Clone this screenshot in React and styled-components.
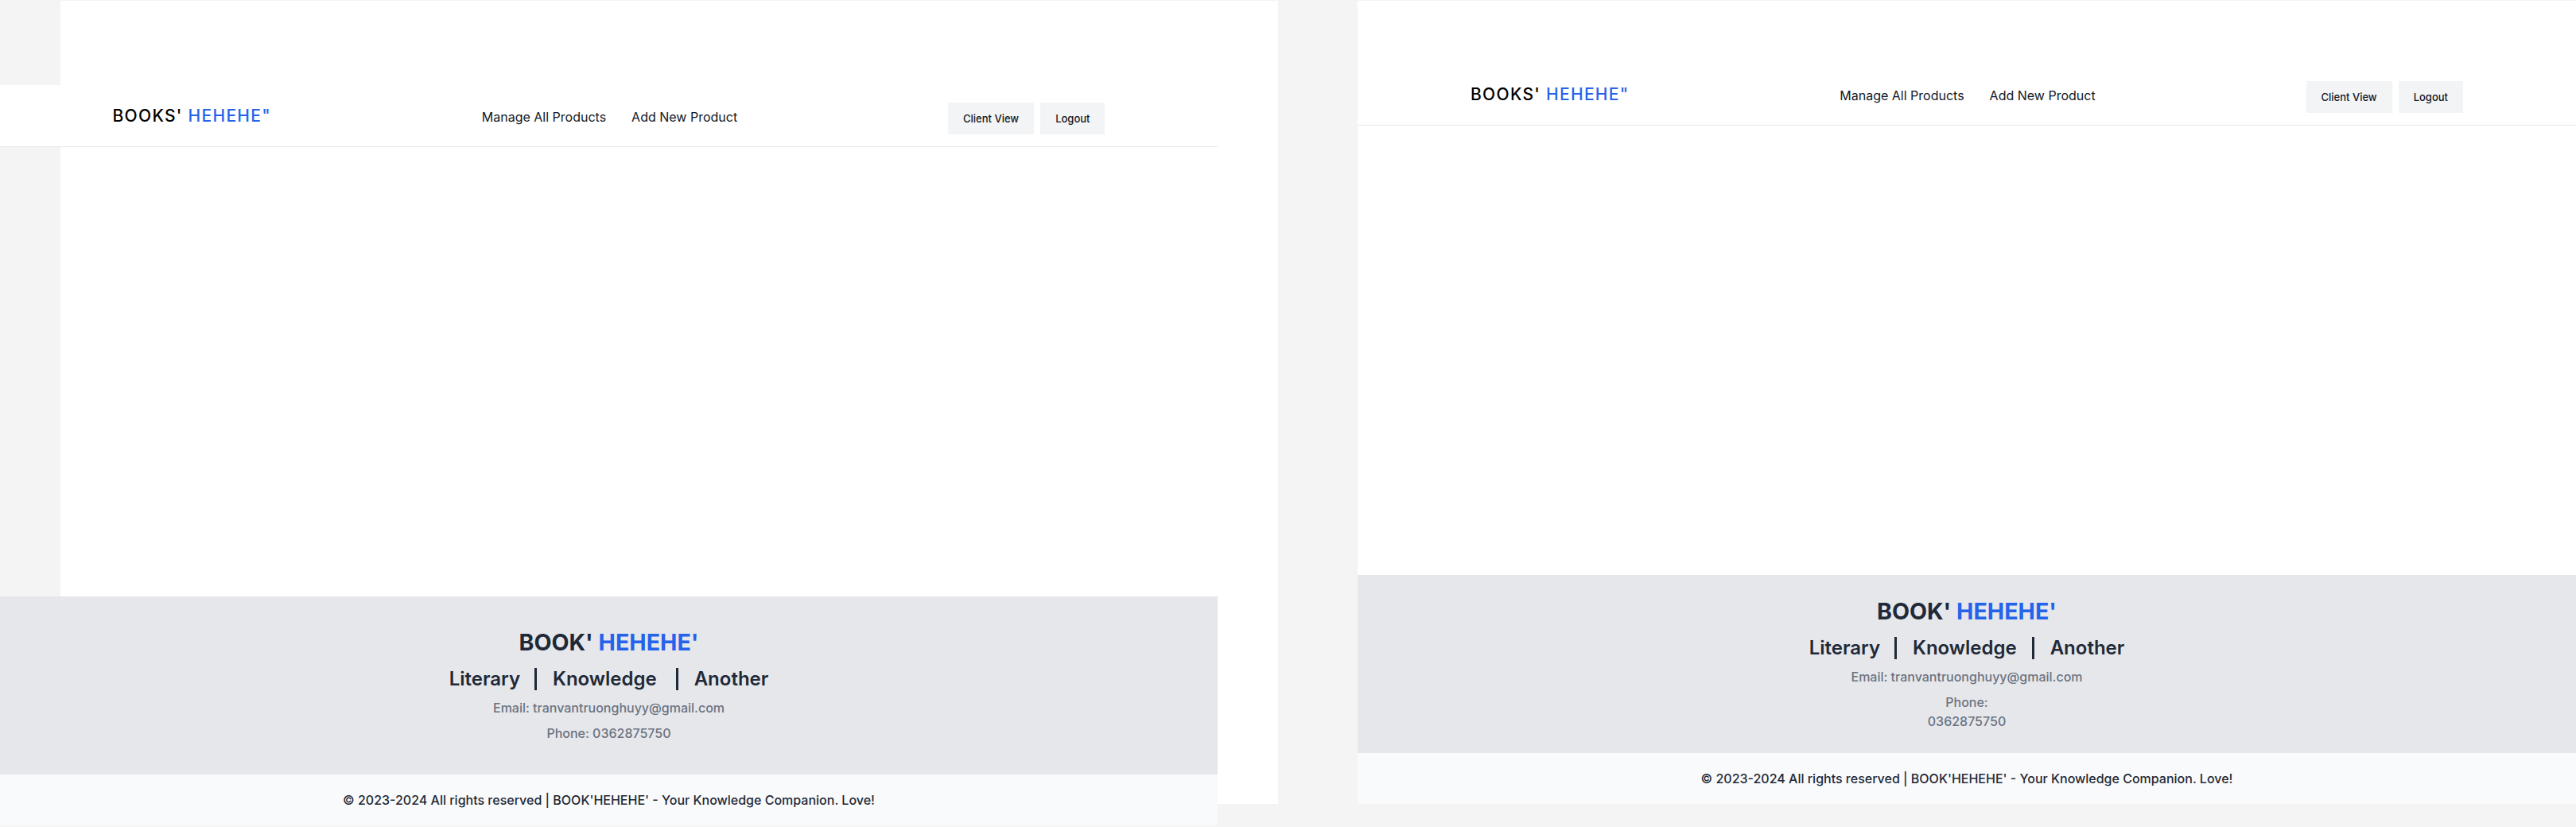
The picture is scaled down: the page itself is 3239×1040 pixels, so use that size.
import React from "react";
import styled, { createGlobalStyle } from "styled-components";

const GlobalStyle = createGlobalStyle`
  html, body { margin: 0; padding: 0; background: #f4f4f4; }
  body { font-family: Inter, "Noto Sans", sans-serif; }
  * { box-sizing: border-box; }
`;

const Stage = styled.div`
  display: flex;
  align-items: flex-start;
  gap: 100px;
  padding-left: 76px;
  width: 3239px;
  height: 1040px;
  overflow: hidden;
  background: #f4f4f4;
`;

const Page = styled.div`
  flex-shrink: 0;
  width: ${(p) => p.$w}px;
  height: 1010px;
  margin-top: 1px;
  background: #ffffff;
`;

const Content = styled.div`
  width: ${(p) => p.$w}px;
  margin-left: ${(p) => p.$shift}px;
  padding-top: ${(p) => p.$top}px;
  display: flex;
  flex-direction: column;
`;

const Nav = styled.header`
  height: 78px;
  background: #ffffff;
  border-bottom: 1px solid #e5e7eb;
  display: flex;
  justify-content: center;
`;

const NavInner = styled.div`
  width: 1248px;
  display: flex;
  align-items: center;
  justify-content: space-between;
`;

const Logo = styled.div`
  font-size: 21px;
  font-weight: 500;
  color: #000000;
  letter-spacing: 1.3px;
  white-space: nowrap;
`;

const Blue = styled.span`
  color: #2563eb;
`;

const Links = styled.nav`
  display: flex;
  gap: 32px;
  margin-top: 2px;
`;

const NavLink = styled.a`
  font-size: 16px;
  font-weight: 400;
  color: #111827;
  text-decoration: none;
  white-space: nowrap;
`;

const Actions = styled.div`
  display: flex;
  gap: 8px;
  margin-top: 6px;
`;

const Button = styled.button`
  height: 40px;
  padding: 0 19px;
  border: none;
  border-radius: 0;
  background: #f3f4f6;
  color: #111827;
  font-family: Inter, "Noto Sans", sans-serif;
  font-size: 13px;
  font-weight: 500;
  cursor: pointer;
`;

const Main = styled.main`
  height: 565px;
`;

const Footer = styled.footer`
  height: 224px;
  background: #e5e7eb;
  display: flex;
  flex-direction: column;
  align-items: center;
  justify-content: center;
  text-align: center;
`;

const FooterTitle = styled.h2`
  margin: 0;
  font-size: 28.6px;
  line-height: 36px;
  font-weight: 700;
  color: #1f2937;
`;

const Categories = styled.div`
  margin-top: 12px;
  display: flex;
  align-items: center;
  height: 32px;
  font-size: 24px;
  font-weight: 600;
  color: #1f2937;
`;

const Category = styled.span`
  line-height: 32px;
`;

const Sep = styled.span`
  display: block;
  width: 3px;
  height: 28px;
  background: #1f2937;
  margin: 0 20px 0 ${(p) => p.$left}px;
`;

const Info = styled.p`
  margin: 8px 0 0;
  font-size: 16px;
  line-height: 24px;
  font-weight: 500;
  color: #6b7280;
`;

const Block = styled.span`
  display: block;
`;

const Bottom = styled.div`
  height: 64px;
  background: #f9fafb;
  display: flex;
  align-items: center;
  justify-content: center;
  font-size: 16px;
  font-weight: 500;
  color: #1f2937;
  white-space: nowrap;
`;

function Site({ wrapPhone, knowledgeGap }) {
  return (
    <>
      <Nav>
        <NavInner>
          <Logo>
            BOOKS' <Blue>HEHEHE"</Blue>
          </Logo>
          <Links>
            <NavLink href="#">Manage All Products</NavLink>
            <NavLink href="#">Add New Product</NavLink>
          </Links>
          <Actions>
            <Button>Client View</Button>
            <Button>Logout</Button>
          </Actions>
        </NavInner>
      </Nav>
      <Main />
      <Footer>
        <FooterTitle>
          BOOK' <Blue>HEHEHE'</Blue>
        </FooterTitle>
        <Categories>
          <Category>Literary</Category>
          <Sep $left={18} />
          <Category>Knowledge</Category>
          <Sep $left={knowledgeGap} />
          <Category>Another</Category>
        </Categories>
        <Info>Email: tranvantruonghuyy@gmail.com</Info>
        {wrapPhone ? (
          <Info>
            <Block>Phone:</Block>
            <Block>0362875750</Block>
          </Info>
        ) : (
          <Info>Phone: 0362875750</Info>
        )}
      </Footer>
      <Bottom>
        © 2023-2024 All rights reserved | BOOK'HEHEHE' - Your Knowledge Companion. Love!
      </Bottom>
    </>
  );
}

export default function App() {
  return (
    <>
      <GlobalStyle />
      <Stage>
        <Page $w={1531}>
          <Content $w={1531} $shift={-76} $top={106}>
            <Site knowledgeGap={24} />
          </Content>
        </Page>
        <Page $w={1532}>
          <Content $w={1532} $shift={0} $top={79}>
            <Site wrapPhone knowledgeGap={19} />
          </Content>
        </Page>
      </Stage>
    </>
  );
}
